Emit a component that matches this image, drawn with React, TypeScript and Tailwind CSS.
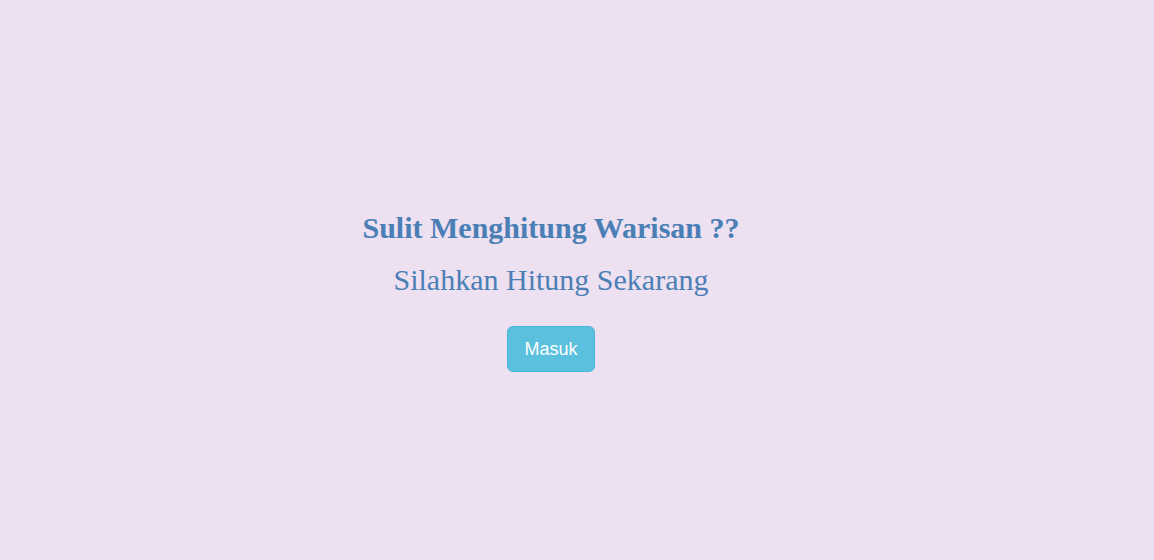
export default function App() {
    return (
        <div className="w-full h-[560px] bg-[#ede0f1] flex">
            <div className="w-full flex flex-col items-center pt-[208px] pr-[52px]">
                <h3 className="text-[30px] leading-[40px] font-bold text-[#4a7fb5] font-['Liberation_Serif',serif]">
                    Sulit Menghitung Warisan ??
                </h3>
                <h2 className="mt-[12px] text-[30px] leading-[40px] text-[#4a7fb5] font-['Liberation_Serif',serif]">
                    Silahkan Hitung Sekarang
                </h2>
                <button className="mt-[26px] h-[46px] px-[16px] text-[18px] leading-[24px] text-white bg-[#5bc0de] border border-[#46b8da] rounded-[6px] font-['Liberation_Sans',sans-serif]">
                    Masuk
                </button>
            </div>
        </div>
    );
}
